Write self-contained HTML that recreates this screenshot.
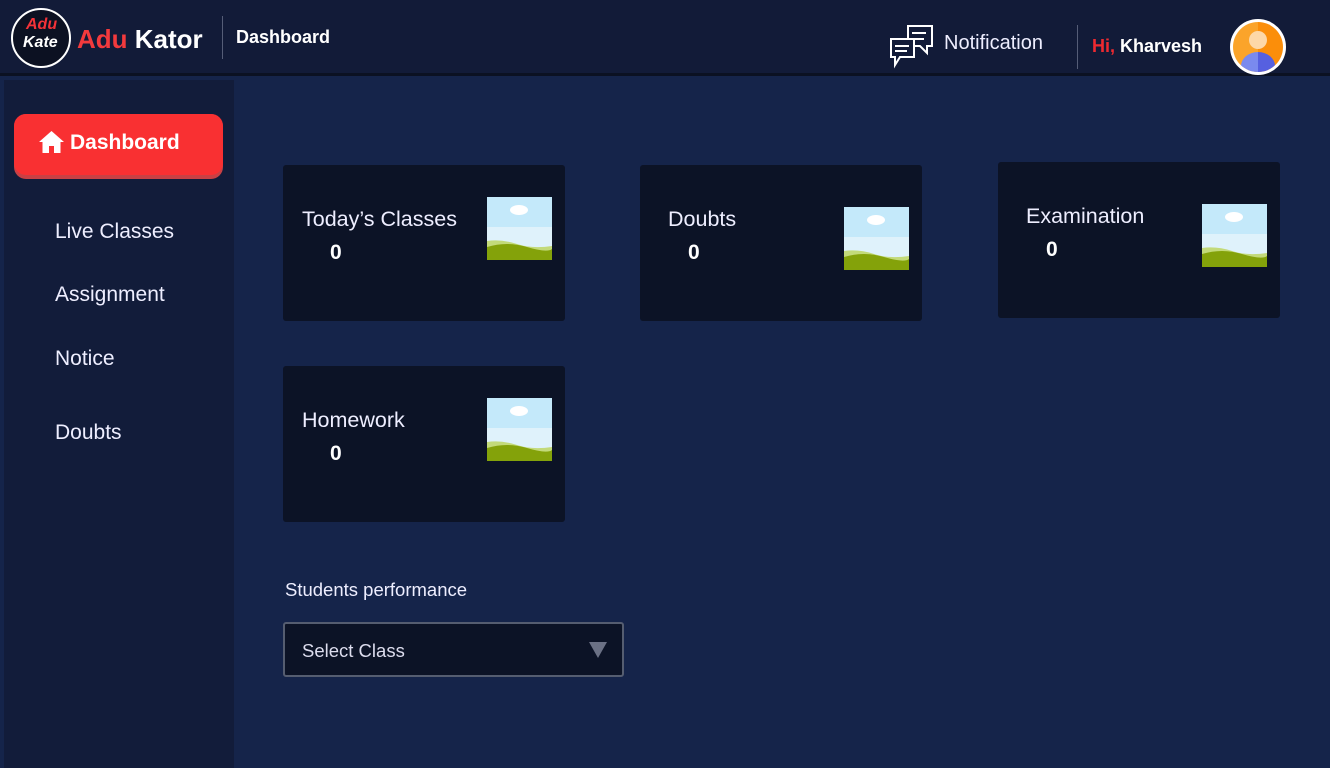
<!DOCTYPE html>
<html><head><meta charset="utf-8"><style>
*{margin:0;padding:0;box-sizing:border-box}
body{width:1330px;height:768px;overflow:hidden;background:#15244a;font-family:"Liberation Sans",sans-serif;color:#fff;position:relative}
.hdr{position:absolute;left:0;top:0;width:1330px;height:76px;background:#121b38;border-bottom:3px solid #0b1122}
.side{position:absolute;left:4px;top:80px;width:230px;height:688px;background:#121c3a}
.abs{position:absolute}
.card{position:absolute;width:282px;height:156px;background:#0c1326;border-radius:3px}
.card .t{position:absolute;left:19px;top:42px;font-size:21.5px;color:#eef}
.card .n{position:absolute;left:47px;top:76px;font-size:21px;font-weight:bold}
.card svg{position:absolute;left:204px;top:32px}
.nav{position:absolute;left:55px;font-size:21px;color:#eef}
</style></head><body>
<div class="hdr"></div>
<div class="abs" style="left:11px;top:8px;width:60px;height:60px;border-radius:50%;border:2px solid #fff;background:#0c1122"></div>
<div class="abs" style="left:26px;top:16px;font:italic bold 16px 'Liberation Sans',sans-serif;color:#f23238">Adu</div>
<div class="abs" style="left:23px;top:34px;font:italic bold 16px 'Liberation Sans',sans-serif;color:#fff">Kate</div>
<div class="abs" style="left:77px;top:24px;font-size:26px;font-weight:bold"><span style="color:#f33a3d">Adu</span> Kator</div>
<div class="abs" style="left:222px;top:16px;width:1px;height:43px;background:#555d77"></div>
<div class="abs" style="left:236px;top:27px;font-size:18px;font-weight:bold">Dashboard</div>
<svg class="abs" style="left:888px;top:24px" width="48" height="45" viewBox="0 0 48 45" fill="#121b38" stroke="#fff" stroke-width="2"><path d="M20 2h24v20h-5v7l-7-7H20z"/><path d="M24 9h14M24 15h12" fill="none"/><path d="M3 15h23v18H12l-5 8v-8H3z"/><path d="M7 22h14M7 27h12" fill="none"/></svg>
<div class="abs" style="left:944px;top:32px;font-size:20px;color:#eef">Notification</div>
<div class="abs" style="left:1077px;top:25px;width:1px;height:44px;background:#555d77"></div>
<div class="abs" style="left:1092px;top:36px;font-size:18px;font-weight:bold"><span style="color:#ee2a30">Hi,</span> Kharvesh</div>
<div class="abs" style="left:1230px;top:19px;width:56px;height:56px;border-radius:50%;background:#fff;padding:3px"><div style="width:50px;height:50px;border-radius:50%;overflow:hidden;background:linear-gradient(90deg,#fba42a 50%,#fb8e0a 50%);position:relative"><div style="position:absolute;left:16px;top:9px;width:18px;height:18px;border-radius:50%;background:#fdd8a8"></div><div style="position:absolute;left:8px;top:30px;width:34px;height:28px;border-radius:50% 50% 0 0;background:linear-gradient(90deg,#7a8aee 50%,#5660e0 50%)"></div></div></div>
<div class="side"></div>
<div class="abs" style="left:14px;top:114px;width:209px;height:65px;border-radius:12px;background:#c94044"></div>
<div class="abs" style="left:14px;top:114px;width:209px;height:61px;border-radius:12px;background:#f93032"></div>
<svg class="abs" style="left:39px;top:131px" width="25" height="22" viewBox="0 0 25 22"><path d="M12.5 0L0 11h3.5v11h6.5v-7h5v7h6.5V11H25z" fill="#fff"/></svg>
<div class="abs" style="left:70px;top:131px;font-size:21px;font-weight:bold">Dashboard</div>
<div class="nav" style="top:220px">Live Classes</div>
<div class="nav" style="top:283px">Assignment</div>
<div class="nav" style="top:347px">Notice</div>
<div class="nav" style="top:421px">Doubts</div>
<svg width="0" height="0" style="position:absolute"><defs><g id="im"><rect width="65" height="63" fill="#dff2fb"/><rect width="65" height="30" fill="#c4e9fa"/><ellipse cx="32" cy="13" rx="9" ry="5" fill="#fff"/><path d="M0 44q15-2 30 3t35 2v14H0z" fill="#c3da7a"/><path d="M0 50q20-6 40 0t25 2v11H0z" fill="#84a20a"/></g></defs></svg>
<div class="card" style="left:283px;top:165px"><div class="t">Today’s Classes</div><div class="n">0</div><svg width="65" height="63"><use href="#im"/></svg></div>
<div class="card" style="left:640px;top:165px"><div class="t" style="left:28px">Doubts</div><div class="n" style="left:48px">0</div><svg width="65" height="63" style="top:42px"><use href="#im"/></svg></div>
<div class="card" style="left:998px;top:162px"><div class="t" style="left:28px">Examination</div><div class="n" style="left:48px">0</div><svg width="65" height="63" style="top:42px"><use href="#im"/></svg></div>
<div class="card" style="left:283px;top:366px"><div class="t">Homework</div><div class="n">0</div><svg width="65" height="63"><use href="#im"/></svg></div>
<div class="abs" style="left:285px;top:579px;font-size:18.5px;color:#eef">Students performance</div>
<div class="abs" style="left:283px;top:622px;width:341px;height:55px;background:#0c1326;border:2px solid #555d70;border-radius:3px"></div>
<div class="abs" style="left:302px;top:640px;font-size:18.5px;color:#dde">Select Class</div>
<svg class="abs" style="left:589px;top:642px" width="18" height="16"><path d="M0 0h18L9 16z" fill="#6b7185"/></svg>
</body></html>
